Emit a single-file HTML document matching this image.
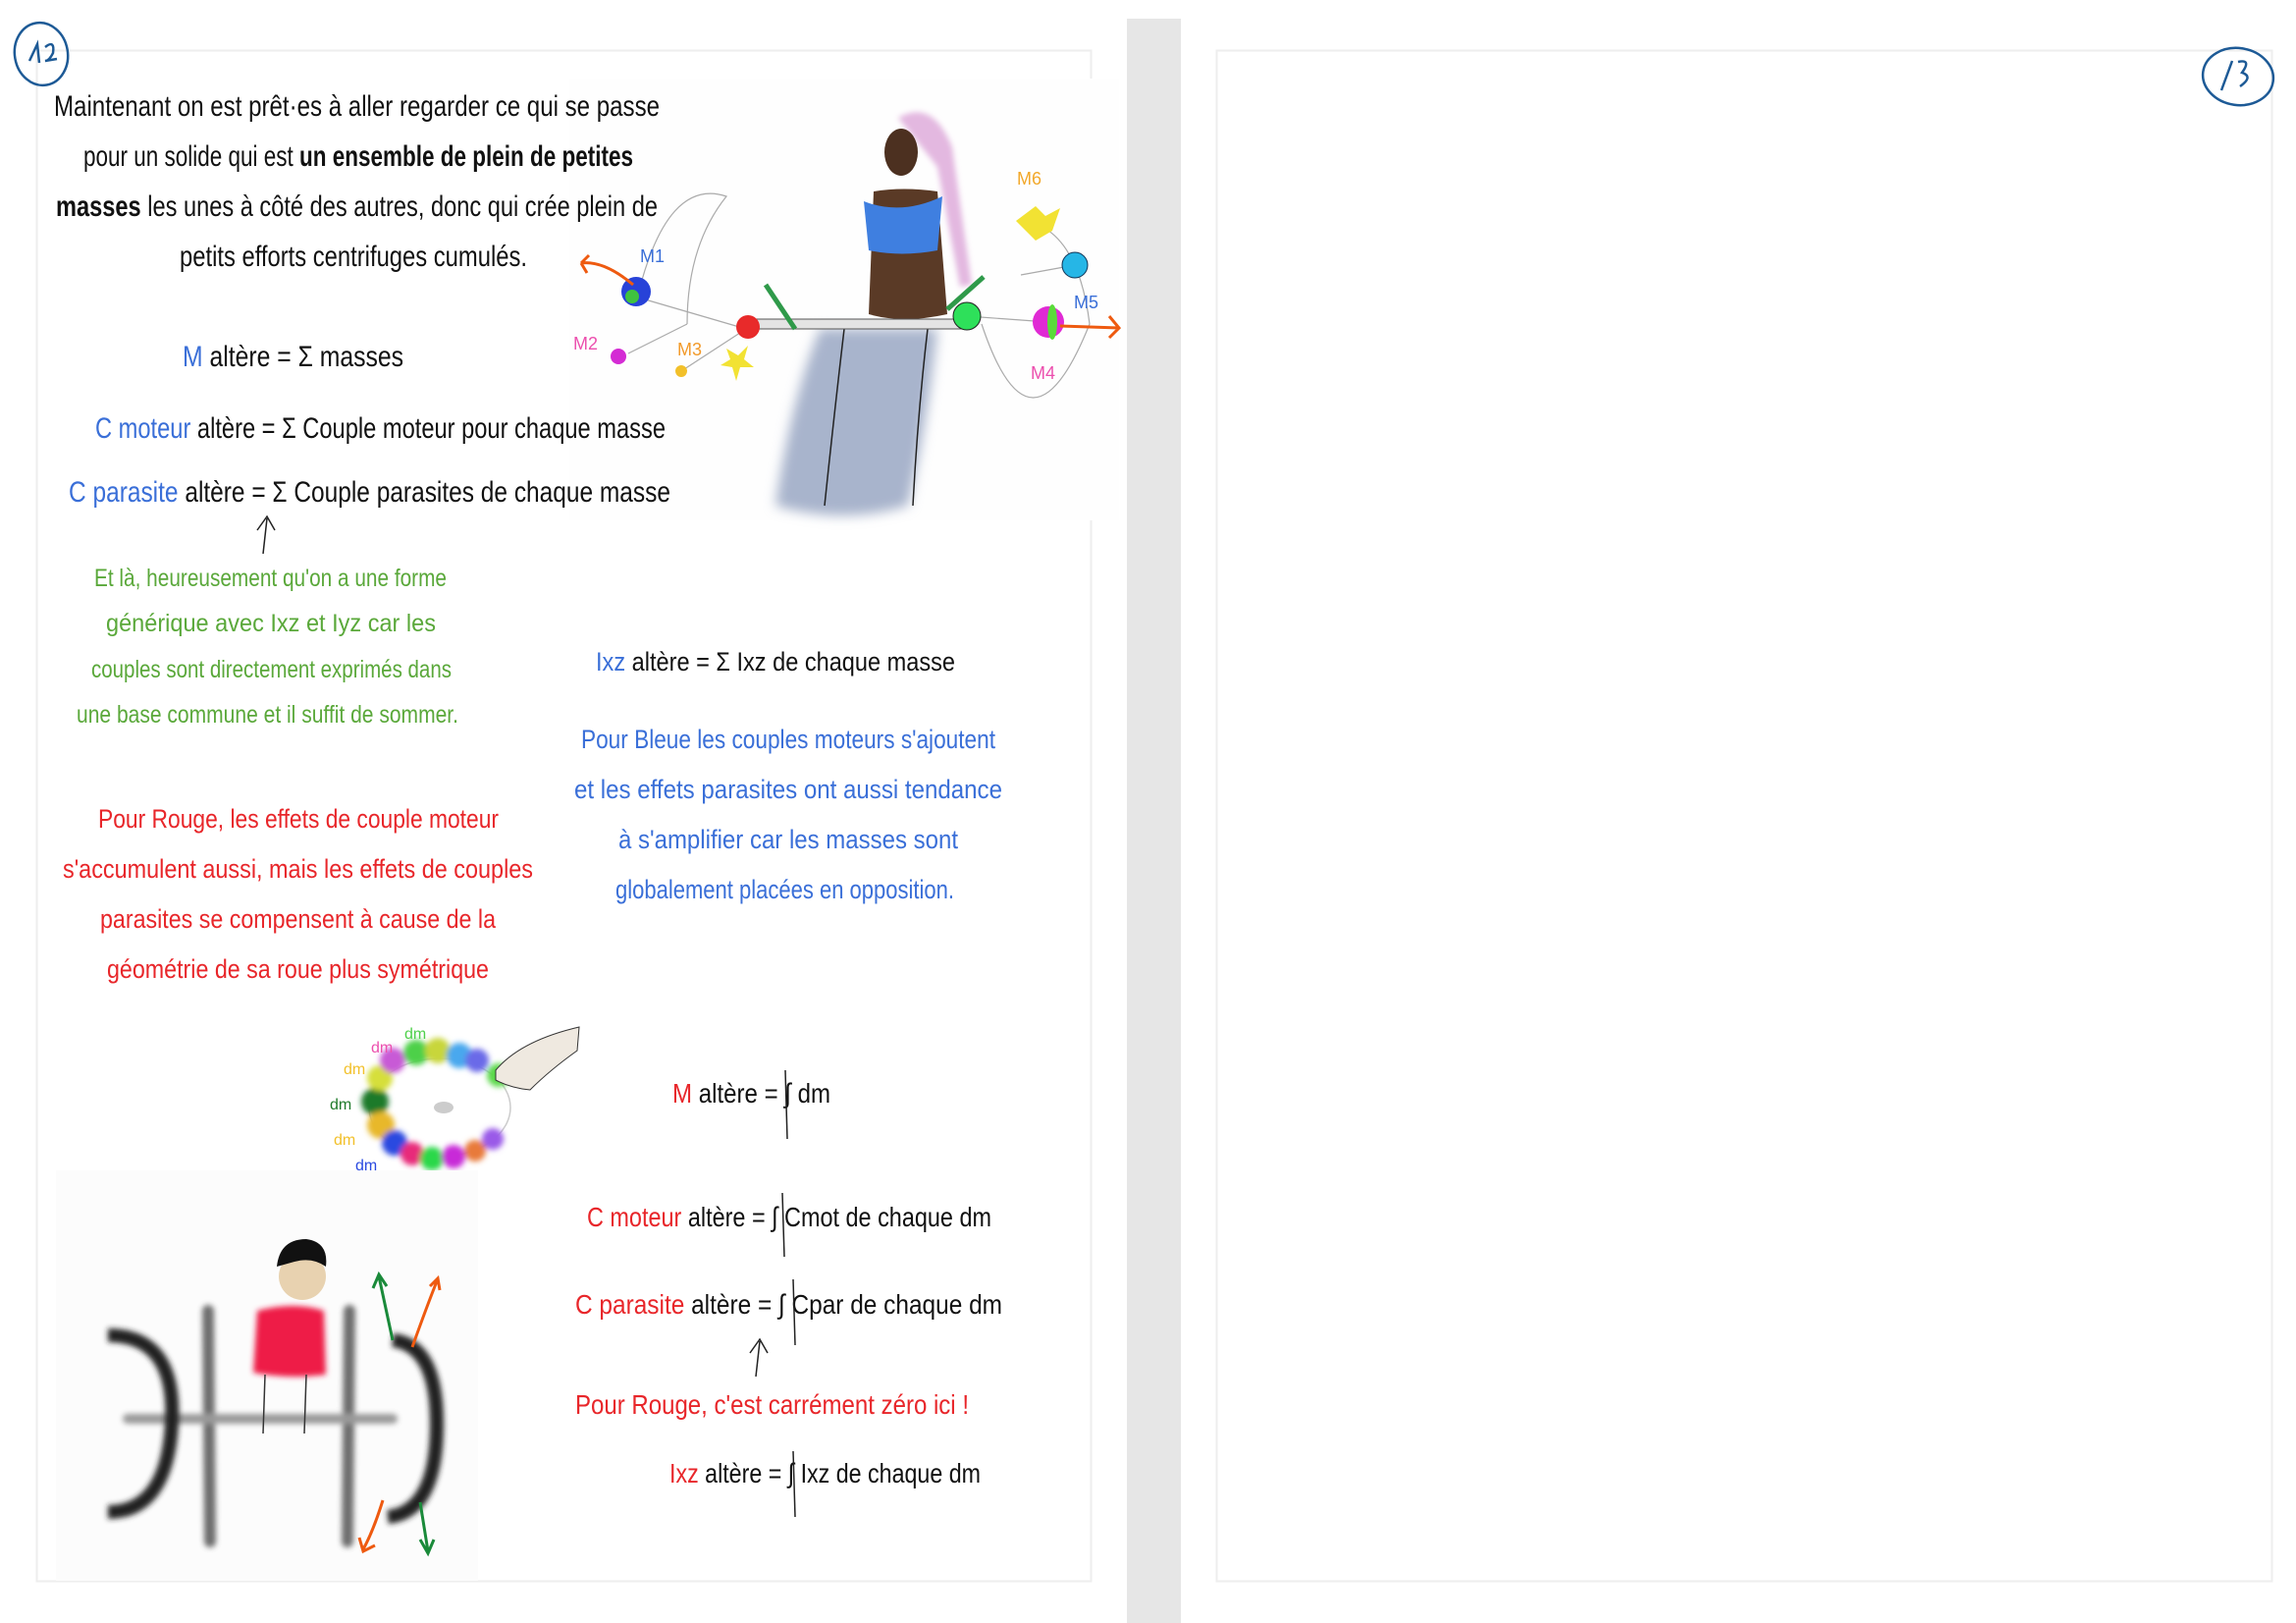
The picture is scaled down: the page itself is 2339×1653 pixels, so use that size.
<!DOCTYPE html>
<html><head><meta charset="utf-8"><style>
html,body{margin:0;padding:0;background:#fff;width:2339px;height:1653px;overflow:hidden}
svg{display:block}
text{font-family:"Liberation Sans Narrow","Liberation Sans",sans-serif;}
</style></head><body>
<svg width="2339" height="1653" viewBox="0 0 2339 1653" xmlns="http://www.w3.org/2000/svg">
<defs>
<filter id="b" x="-50%" y="-50%" width="200%" height="200%"><feGaussianBlur stdDeviation="6"/></filter>
<filter id="b2" x="-50%" y="-50%" width="200%" height="200%"><feGaussianBlur stdDeviation="3"/></filter>
</defs>
<rect width="2339" height="1653" fill="#fff"/>
<rect x="1148" y="19" width="55" height="1634" fill="#e6e6e6"/>
<rect x="37.5" y="51.5" width="1074" height="1559" fill="#fff" stroke="#eeeeee" stroke-width="2"/>
<rect x="1239.5" y="51.5" width="1075" height="1559" fill="#fff" stroke="#eeeeee" stroke-width="2"/>
<g fill="none" stroke="#1d5a96" stroke-width="2.5">
<ellipse cx="42" cy="55" rx="27" ry="32" transform="rotate(-10 42 55)"/>
<path d="M30 62 L38 45 L40 64 M46 48 Q56 40 54 54 Q50 62 46 62 L58 60"/>
<ellipse cx="2280" cy="78" rx="36" ry="29" transform="rotate(8 2280 78)"/>
<path d="M2263 92 L2274 62 M2280 63 Q2294 60 2284 74 Q2296 78 2282 88"/>
</g>
<g>
<rect x="580" y="80" width="560" height="450" fill="#fefefe"/>
<path d="M915 120 Q950 100 970 150 L990 290 L978 292 L955 170 Z" fill="#e3b8e0" filter="url(#b2)"/>
<path d="M790 515 Q805 410 835 335 L955 335 Q945 430 925 515 Q860 535 790 515Z" fill="#a8b4cc" filter="url(#b)"/>
<path d="M890 195 Q920 190 955 195 L965 320 Q920 330 885 320 Z" fill="#5a3a26"/>
<ellipse cx="918" cy="155" rx="17" ry="24" fill="#4c3020"/>
<path d="M880 205 Q918 220 960 200 L955 255 Q918 262 885 255 Z" fill="#3f7fe0"/>
<path d="M840 515 Q850 420 860 335 M930 515 Q935 420 945 335" stroke="#222" stroke-width="1.5" fill="none"/>
<g fill="none" stroke="#aaa" stroke-width="1.2">
<path d="M650 300 Q680 180 740 200 Q700 250 700 330"/>
<path d="M1000 330 Q1050 480 1110 330 Q1100 250 1060 230"/>
<path d="M640 300 L760 335 M640 360 L700 330 M694 378 L760 335 M985 322 L1068 328 M1095 270 L1040 280"/>
</g>
<rect x="765" y="325" width="225" height="10" fill="#e4e4e4" stroke="#555" stroke-width="1"/>
<circle cx="648" cy="297" r="15" fill="#2742d8"/><circle cx="644" cy="302" r="7" fill="#3fc23f"/>
<circle cx="630" cy="363" r="8" fill="#d42bd4"/>
<circle cx="694" cy="378" r="6" fill="#f2c02a"/>
<path d="M740 355 L752 362 L762 352 L758 366 L768 374 L754 374 L750 388 L746 374 L734 372 L744 366Z" fill="#f2e233"/>
<circle cx="762" cy="333" r="12" fill="#e82a2a"/>
<circle cx="985" cy="322" r="14" fill="#2ee05a" stroke="#222" stroke-width="1"/>
<circle cx="1068" cy="328" r="16" fill="#e02ad4"/><ellipse cx="1072" cy="328" rx="5" ry="18" fill="#5adc3a"/>
<circle cx="1095" cy="270" r="13" fill="#26b6e6" stroke="#135" stroke-width="1"/>
<path d="M1035 225 L1055 210 L1065 220 L1080 212 L1072 235 L1055 245 Z" fill="#f2e233"/>
<g fill="none" stroke="#ee5a10" stroke-width="3">
<path d="M645 290 Q615 265 592 268 M592 268 L600 260 M592 268 L598 278"/>
<path d="M1080 332 L1140 334 M1130 322 L1140 334 L1130 344"/>
</g>
<g fill="none" stroke="#2f9a4a" stroke-width="5">
<path d="M810 335 L780 290"/><path d="M965 315 L1002 282"/>
</g>
<g font-size="18">
<text x="652" y="267" fill="#3a6fd8">M1</text>
<text x="584" y="356" fill="#ec4fae">M2</text>
<text x="690" y="362" fill="#f29a2a">M3</text>
<text x="1036" y="188" fill="#f2a82a">M6</text>
<text x="1094" y="314" fill="#3a6fd8">M5</text>
<text x="1050" y="386" fill="#ec4fae">M4</text>
</g>
</g>
<g fill="#111" font-size="30">
<text x="55" y="118" textLength="617" lengthAdjust="spacingAndGlyphs">Maintenant on est prêt·es à aller regarder ce qui se passe</text>
<text x="85" y="169" textLength="560" lengthAdjust="spacingAndGlyphs">pour un solide qui est <tspan font-weight="bold">un ensemble de plein de petites</tspan></text>
<text x="57" y="220" textLength="613" lengthAdjust="spacingAndGlyphs"><tspan font-weight="bold">masses</tspan> les unes à côté des autres, donc qui crée plein de</text>
<text x="183" y="271" textLength="354" lengthAdjust="spacingAndGlyphs">petits efforts centrifuges cumulés.</text>
<text x="186" y="373" textLength="225" lengthAdjust="spacingAndGlyphs"><tspan fill="#3a6fd8">M</tspan> altère = Σ masses</text>
<text x="97" y="446" textLength="581" lengthAdjust="spacingAndGlyphs"><tspan fill="#3a6fd8">C moteur</tspan> altère = Σ Couple moteur pour chaque masse</text>
<text x="70" y="511" textLength="613" lengthAdjust="spacingAndGlyphs"><tspan fill="#3a6fd8">C parasite</tspan> altère = Σ Couple parasites de chaque masse</text>
</g>
<path d="M268 564 L272 528 M262 540 L272 526 L280 540" stroke="#222" stroke-width="1.5" fill="none"/>
<g fill="#5aa83a" font-size="25">
<text x="96" y="597" textLength="359" lengthAdjust="spacingAndGlyphs">Et là, heureusement qu'on a une forme</text>
<text x="108" y="643" textLength="336" lengthAdjust="spacingAndGlyphs">générique avec Ixz et Iyz car les</text>
<text x="93" y="690" textLength="367" lengthAdjust="spacingAndGlyphs">couples sont directement exprimés dans</text>
<text x="78" y="736" textLength="389" lengthAdjust="spacingAndGlyphs">une base commune et il suffit de sommer.</text>
</g>
<text x="607" y="683" font-size="27" fill="#111" textLength="366" lengthAdjust="spacingAndGlyphs"><tspan fill="#3a6fd8">Ixz</tspan> altère = Σ Ixz de chaque masse</text>
<g fill="#3a6fd8" font-size="27">
<text x="592" y="762" textLength="422" lengthAdjust="spacingAndGlyphs">Pour Bleue les couples moteurs s'ajoutent</text>
<text x="585" y="813" textLength="436" lengthAdjust="spacingAndGlyphs">et les effets parasites ont aussi tendance</text>
<text x="630" y="864" textLength="346" lengthAdjust="spacingAndGlyphs">à s'amplifier car les masses sont</text>
<text x="627" y="915" textLength="345" lengthAdjust="spacingAndGlyphs">globalement placées en opposition.</text>
</g>
<g fill="#e8262a" font-size="27">
<text x="100" y="843" textLength="408" lengthAdjust="spacingAndGlyphs">Pour Rouge, les effets de couple moteur</text>
<text x="64" y="894" textLength="479" lengthAdjust="spacingAndGlyphs">s'accumulent aussi, mais les effets de couples</text>
<text x="102" y="945" textLength="403" lengthAdjust="spacingAndGlyphs">parasites se compensent à cause de la</text>
<text x="109" y="996" textLength="389" lengthAdjust="spacingAndGlyphs">géométrie de sa roue plus symétrique</text>
</g>
<g>
<ellipse cx="448" cy="1128" rx="72" ry="50" fill="none" stroke="#ccc" stroke-width="1.5"/>
<ellipse cx="452" cy="1128" rx="10" ry="6" fill="#ccc"/>
<g filter="url(#b2)">
<circle cx="382" cy="1122" r="14" fill="#1f7a2a"/>
<circle cx="387" cy="1098" r="13" fill="#d6df3a"/>
<circle cx="400" cy="1080" r="13" fill="#c85ad6"/>
<circle cx="424" cy="1072" r="13" fill="#4ed04a"/>
<circle cx="446" cy="1070" r="13" fill="#c8d63a"/>
<circle cx="468" cy="1075" r="13" fill="#4aa8ee"/>
<circle cx="486" cy="1080" r="12" fill="#6a6ae8"/>
<circle cx="508" cy="1095" r="12" fill="#5ad84a"/>
<circle cx="388" cy="1146" r="14" fill="#e8b82a"/>
<circle cx="402" cy="1164" r="13" fill="#2a4ae0"/>
<circle cx="420" cy="1175" r="12" fill="#e82a7a"/>
<circle cx="440" cy="1180" r="12" fill="#2ad84a"/>
<circle cx="462" cy="1178" r="12" fill="#c82ad8"/>
<circle cx="484" cy="1172" r="11" fill="#e87a3a"/>
<circle cx="502" cy="1160" r="11" fill="#9a5ae8"/>
</g>
<path d="M505 1090 Q530 1060 590 1046 L588 1070 Q560 1090 540 1110 Q520 1108 505 1100Z" fill="#efe9e0" stroke="#333" stroke-width="1"/>
<g font-size="16">
<text x="412" y="1058" fill="#4ed04a">dm</text>
<text x="378" y="1072" fill="#ec4fae">dm</text>
<text x="350" y="1094" fill="#f2c02a">dm</text>
<text x="336" y="1130" fill="#1f7a2a">dm</text>
<text x="340" y="1166" fill="#f2c02a">dm</text>
<text x="362" y="1192" fill="#2a4ae0">dm</text>
<text x="390" y="1212" fill="#ec4fae">dm</text>
<text x="424" y="1218" fill="#4ed04a">dm</text>
</g>
</g>
<g>
<rect x="57" y="1192" width="430" height="418" fill="#fcfcfc"/>
<g stroke="#555" stroke-width="12" stroke-linecap="round" filter="url(#b2)" opacity=".85">
<path d="M212 1335 L214 1570"/><path d="M356 1335 L354 1570"/>
<path d="M130 1445 L400 1445" stroke-width="10" stroke="#888"/>
</g>
<g fill="none" stroke="#222" stroke-width="14" filter="url(#b2)">
<path d="M110 1360 Q180 1360 175 1450 Q170 1540 110 1540"/>
<path d="M400 1365 Q445 1370 445 1450 Q445 1540 395 1545"/>
</g>
<path d="M262 1335 Q300 1325 330 1335 L332 1400 Q295 1405 258 1398Z" fill="#ee1a46" filter="url(#b2)"/>
<circle cx="308" cy="1300" r="24" fill="#e8d2b0"/>
<path d="M282 1290 Q285 1262 312 1262 Q335 1265 332 1290 Q318 1280 300 1285Z" fill="#111"/>
<path d="M270 1400 L268 1460 M312 1400 L310 1460" stroke="#333" stroke-width="1.5"/>
<g fill="none" stroke-width="3">
<path d="M400 1365 L386 1300 M380 1312 L386 1298 L394 1310" stroke="#1a8a3a"/>
<path d="M428 1530 L436 1580 M428 1568 L436 1582 L442 1568" stroke="#1a8a3a"/>
<path d="M420 1372 Q435 1330 445 1305 M438 1310 L446 1302 L448 1314" stroke="#ee5a10"/>
<path d="M390 1528 Q380 1560 370 1578 M366 1566 L370 1580 L382 1574" stroke="#ee5a10"/>
</g>
</g>
<g font-size="28" fill="#111">
<text x="685" y="1123" textLength="161" lengthAdjust="spacingAndGlyphs"><tspan fill="#e8262a">M</tspan> altère = ∫ dm</text>
<text x="598" y="1249" textLength="412" lengthAdjust="spacingAndGlyphs"><tspan fill="#e8262a">C moteur</tspan> altère = ∫ Cmot de chaque dm</text>
<text x="586" y="1338" textLength="435" lengthAdjust="spacingAndGlyphs"><tspan fill="#e8262a">C parasite</tspan> altère = ∫ Cpar de chaque dm</text>
<text x="586" y="1440" fill="#e8262a" textLength="401" lengthAdjust="spacingAndGlyphs">Pour Rouge, c'est carrément zéro ici !</text>
<text x="682" y="1510" textLength="317" lengthAdjust="spacingAndGlyphs"><tspan fill="#e8262a">Ixz</tspan> altère = ∫ Ixz de chaque dm</text>
</g>
<g stroke="#222" stroke-width="1.5" fill="none">
<path d="M800 1090 L802 1160"/><path d="M797 1215 L799 1280"/><path d="M808 1303 L810 1370"/><path d="M808 1478 L810 1545"/>
<path d="M770 1402 L774 1366 M764 1378 L774 1364 L782 1378"/>
</g>
</svg>
</body></html>
